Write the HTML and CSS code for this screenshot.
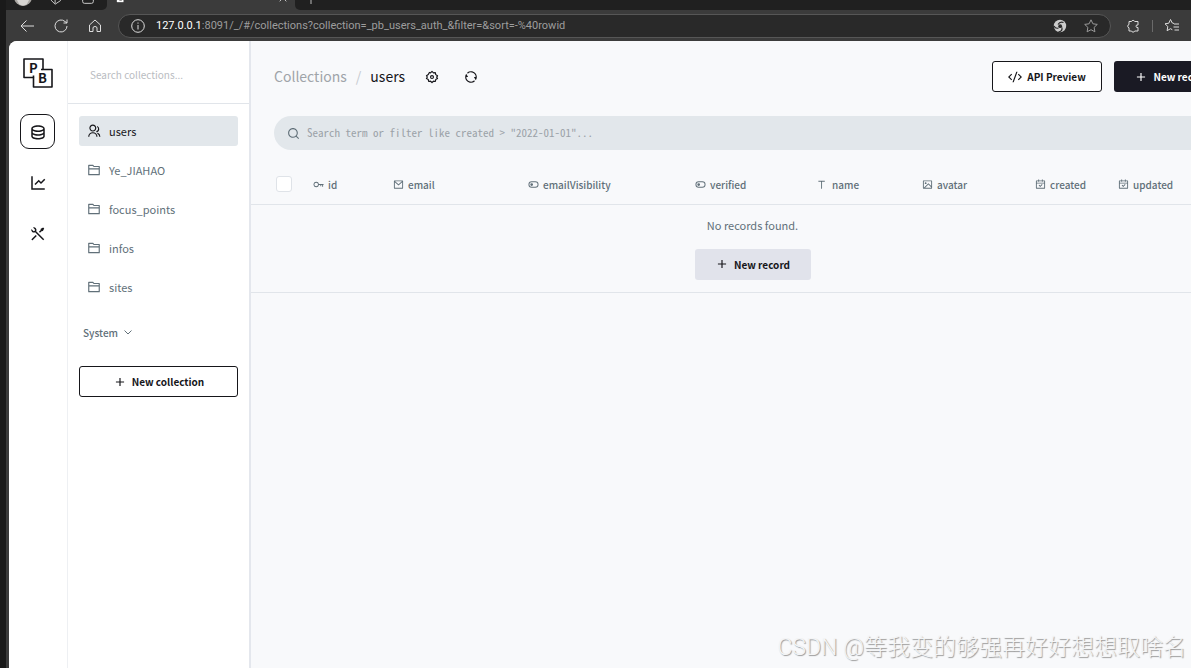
FILE: index.html
```html
<!DOCTYPE html>
<html lang="en">
<head>
    <meta charset="UTF-8">
    <title>users - PocketBase</title>
    <link rel="stylesheet" href="styles.css">
</head>
<body>

<svg class="sprite" aria-hidden="true">
    <symbol id="i-plus" viewBox="0 0 24 24"><path d="M11 11V5h2v6h6v2h-6v6h-2v-6H5v-2z"/></symbol>
    <symbol id="i-folder" viewBox="0 0 24 24"><path d="M12.414 5H21a1 1 0 0 1 1 1v14a1 1 0 0 1-1 1H3a1 1 0 0 1-1-1V4a1 1 0 0 1 1-1h7.414l2 2zM4 11v8h16v-8H4zm0-2h16V7h-8.414l-2-2H4v4z"/></symbol>
    <symbol id="i-toggle" viewBox="0 0 24 24"><path d="M8 7a5 5 0 0 0 0 10h8a5 5 0 0 0 0-10H8zm0-2h8a7 7 0 0 1 0 14H8A7 7 0 0 1 8 5zm0 10a3 3 0 1 1 0-6 3 3 0 0 1 0 6z"/></symbol>
    <symbol id="i-calendar" viewBox="0 0 24 24"><path d="M9 1v2h6V1h2v2h4a1 1 0 0 1 1 1v16a1 1 0 0 1-1 1H3a1 1 0 0 1-1-1V4a1 1 0 0 1 1-1h4V1h2zm11 9H4v9h16v-9zm-4.964 1.136l1.414 1.414-4.95 4.95-3.536-3.536L9.38 12.55l2.121 2.122 3.536-3.536zM7 5H4v3h16V5h-3v1h-2V5H9v1H7V5z"/></symbol>
</svg>

<div class="desktop"></div>

<div class="browser">
    <div class="tabstrip">
        <div class="tab-tools">
            <svg class="person" viewBox="0 0 18 18"><circle cx="9" cy="9" r="9" fill="#aaa7a3"/><path d="M3 12q6-5 12 0l-2 4q-4 3-8 0z" fill="#d8d6d3"/></svg>
            <svg class="line" viewBox="0 0 18 18"><path d="M3 5v6l5 5 6-4V5M8 9v6M8 10l6-2"/></svg>
            <svg class="line" viewBox="0 0 18 18"><rect x="3" y="3" width="12" height="12" rx="2"/><path d="M3 9h12M7 9V3"/></svg>
        </div>
        <div class="tab">
            <svg class="favicon" viewBox="0 0 12 12"><path d="M1 1h8v10H1z" fill="#fff"/><path d="M4 5h3v4H4z" fill="#333"/></svg>
            <svg class="line" viewBox="0 0 12 12"><path d="M2 2l8 8M10 2l-8 8"/></svg>
        </div>
        <div class="new-tab">
            <svg class="line" viewBox="0 0 12 12"><path d="M6 0v12M0 6h12"/></svg>
        </div>
    </div>

    <div class="toolbar">
        <button class="tool" aria-label="Back"><svg class="line" viewBox="0 0 16 16"><path d="M15 8H2M7.500 2.500L2 8l5.500 5.500"/></svg></button>
        <button class="tool" aria-label="Refresh"><svg class="line" viewBox="0 0 16 16"><path d="M14 8a6 6 0 1 1-2-4.500L14 5M14 1.500V5h-3.500"/></svg></button>
        <button class="tool" aria-label="Home"><svg class="line" viewBox="0 0 16 16"><path d="M2.500 7L8 2l5.500 5v6.500h-3.500V10q0-1.500-2-1.500T6 10v3.500H2.500z"/></svg></button>
        <div class="address">
            <svg class="line" viewBox="0 0 16 16"><circle cx="8" cy="8" r="6.300"/><path d="M8 7v4.500M8 4.500v1.200"/></svg>
            <span class="url"><b>127.0.0.1</b>:8091/_/#/collections?collection=_pb_users_auth_&amp;filter=&amp;sort=-%40rowid</span>
            <svg class="swirl" viewBox="0 0 16 16"><circle cx="8" cy="8" r="6.200" fill="#ccc"/><path d="M6 6.500Q8 3 11.500 4.500M10 9.500Q10.500 13.500 6.500 13.800M6.500 10Q3.500 11 2 8" fill="none" stroke="#292929" stroke-width="1.200"/><circle cx="8.200" cy="8.200" r="1.900" fill="#292929"/></svg>
            <svg class="line star" viewBox="0 0 16 16"><path d="M8 1.800l1.900 4 4.400.6-3.200 3 .8 4.400L8 11.700l-3.900 2.100.8-4.400-3.200-3 4.400-.6z"/></svg>
        </div>
        <button class="tool" aria-label="Extensions"><svg class="line" viewBox="0 0 16 16"><path d="M4 3.500h2.500a1.700 1.700 0 0 1 3.200 0h3.300V7q-2-.5-2 1.200T13 9.500V13H9.700a1.700 1.700 0 0 1-3.200 0H4V9.800a1.700 1.700 0 0 1 0-3.300z"/></svg></button>
        <span class="split"></span>
        <button class="tool" aria-label="Favorites"><svg class="line" viewBox="0 0 16 16"><path d="M10 5.500L8.300 5 6.500 1.500 4.800 5.200 1 5.800l2.800 2.700-.7 4.200 3.400-2 1.800 1M10 6h5M9.500 9H15M10.500 12H15"/></svg></button>
    </div>

    <div class="app">
        <nav class="rail">
            <a href="#/" class="logo" aria-label="PocketBase">
                <svg viewBox="0 0 32 32">
                    <path d="M2 2h19v10.500h9V30H11.500V20.500H2z" fill="#fff" stroke="#16161a" stroke-width="1.600" stroke-linejoin="round"/>
                    <path d="M11.500 20.500v-2M21 12.500h-2" stroke="#16161a" stroke-width="1.600"/>
                    <text x="7" y="16">P</text>
                    <text x="16" y="26">B</text>
                </svg>
            </a>
            <a href="#/collections" class="rail-item active" aria-label="Collections">
                <svg viewBox="0 0 24 24"><path d="M5 12.500c0 .313.461.858 1.530 1.393C7.914 14.585 9.877 15 12 15s4.086-.415 5.470-1.107c1.069-.535 1.530-1.080 1.530-1.393v-2.171C17.350 11.348 14.827 12 12 12s-5.350-.652-7-1.671V12.500zm14 2.829C17.350 16.348 14.827 17 12 17s-5.350-.652-7-1.671V17.500c0 .313.461.858 1.530 1.393C7.914 19.585 9.877 20 12 20s4.086-.415 5.470-1.107c1.069-.535 1.530-1.080 1.530-1.393v-2.171zM3 17.500v-10C3 5.015 7.030 3 12 3s9 2.015 9 4.500v10c0 2.485-4.030 4.500-9 4.500s-9-2.015-9-4.500zM12 10c2.123 0 4.086-.415 5.470-1.107C18.539 8.358 19 7.813 19 7.500s-.461-.858-1.530-1.393C16.086 5.415 14.123 5 12 5s-4.086.415-5.470 1.107C5.461 6.642 5 7.187 5 7.500s.461.858 1.530 1.393C7.914 9.585 9.877 10 12 10z"/></svg>
            </a>
            <a href="#/logs" class="rail-item" aria-label="Logs">
                <svg viewBox="0 0 24 24"><path d="M5 3v16h16v2H3V3h2zm15.293 3.293l1.414 1.414L16 13.414l-3-2.999-4.293 4.292-1.414-1.414L13 7.586l3 2.999 4.293-4.292z"/></svg>
            </a>
            <a href="#/settings" class="rail-item" aria-label="Settings">
                <svg viewBox="0 0 24 24"><path d="M5.329 3.272a3.500 3.500 0 0 1 4.255 4.962l10.709 10.710-1.414 1.414L8.170 9.649a3.500 3.500 0 0 1-4.963-4.256L5.444 7.630a1.500 1.500 0 1 0 2.121-2.121L5.329 3.272zM15.697 5.155l3.182-1.768 1.414 1.415-1.768 3.182-1.768.353-2.121 2.121-1.414-1.414 2.121-2.121.354-1.768zM8.979 13.287l1.415 1.414-5.304 5.303a1 1 0 0 1-1.492-1.327l.078-.087 5.303-5.303z"/></svg>
            </a>
        </nav>

        <aside class="sidebar">
            <div class="sidebar-search">
                <input type="text" placeholder="Search collections..." aria-label="Search collections">
            </div>
            <div class="collections">
                <a href="#/users" class="collection active">
                    <svg class="icon" viewBox="0 0 24 24"><path d="M2 22a8 8 0 1 1 16 0h-2a6 6 0 1 0-12 0H2zm8-9c-3.315 0-6-2.685-6-6s2.685-6 6-6 6 2.685 6 6-2.685 6-6 6zm0-2c2.210 0 4-1.790 4-4s-1.790-4-4-4-4 1.790-4 4 1.790 4 4 4zm8.284 3.703A8.002 8.002 0 0 1 23 22h-2a6.001 6.001 0 0 0-3.537-5.473l.82-1.824zm-.688-11.290A5.500 5.500 0 0 1 21 8.500a5.499 5.499 0 0 1-5 5.478v-2.013a3.500 3.500 0 0 0 1.041-6.609l.555-1.943z"/></svg>
                    users
                </a>
                <a href="#/Ye_JIAHAO" class="collection"><svg class="icon"><use href="#i-folder"/></svg>Ye_JIAHAO</a>
                <a href="#/focus_points" class="collection"><svg class="icon"><use href="#i-folder"/></svg>focus_points</a>
                <a href="#/infos" class="collection"><svg class="icon"><use href="#i-folder"/></svg>infos</a>
                <a href="#/sites" class="collection"><svg class="icon"><use href="#i-folder"/></svg>sites</a>
                <button class="system">System <svg viewBox="0 0 12 12"><path d="M2.500 4.500L6 8l3.500-3.500" fill="none" stroke="currentColor"/></svg></button>
                <button class="btn btn-outline btn-block"><svg class="icon"><use href="#i-plus"/></svg>New collection</button>
            </div>
        </aside>

        <main class="main">
            <div class="page">
                <header class="page-header">
                    <div class="breadcrumbs">
                        <a href="#/collections">Collections</a>
                        <span class="slash">/</span>
                        <span class="current">users</span>
                    </div>
                    <button class="btn-circle" aria-label="Edit collection"><svg viewBox="0 0 24 24"><path d="M7.500 4.200L9.500 5 12 2.500 14.500 5l3.200-.5.700 3.400L21.500 10l-1.500 2.200 1.500 2.500-3.100 1.700-.7 3.300-3.200-.5-2.500 2.300-2.500-2.300-3.200.5-.7-3.300-3.100-1.700L4 12 2.500 9.800l3.100-2z" fill="none" stroke="currentColor" stroke-width="2" stroke-linejoin="round"/><circle cx="12" cy="12" r="2.500" fill="none" stroke="currentColor" stroke-width="2"/></svg></button>
                    <button class="btn-circle" aria-label="Refresh records"><svg viewBox="0 0 24 24"><path d="M5.463 4.433A9.961 9.961 0 0 1 12 2c5.523 0 10 4.477 10 10 0 2.136-.67 4.116-1.810 5.740L17 12h3A8 8 0 0 0 6.460 6.228l-.997-1.795zm13.074 15.134A9.961 9.961 0 0 1 12 22C6.477 22 2 17.523 2 12c0-2.136.67-4.116 1.810-5.740L7 12H4a8 8 0 0 0 13.540 5.772l.997 1.795z"/></svg></button>
                    <div class="header-buttons">
                        <button class="btn btn-outline"><svg class="icon" viewBox="0 0 24 24"><path d="M24 12l-5.657 5.657-1.414-1.414L21.172 12l-4.243-4.243 1.414-1.414L24 12zM2.828 12l4.243 4.243-1.414 1.414L0 12l5.657-5.657L7.070 7.757 2.828 12zm6.960 9H7.660l6.552-18h2.128L9.788 21z"/></svg>API Preview</button>
                        <button class="btn btn-dark"><svg class="icon"><use href="#i-plus"/></svg>New record</button>
                    </div>
                </header>

                <div class="searchbar">
                    <svg viewBox="0 0 24 24"><path d="M18.031 16.617l4.283 4.282-1.415 1.415-4.282-4.283A8.960 8.960 0 0 1 11 20c-4.968 0-9-4.032-9-9s4.032-9 9-9 9 4.032 9 9a8.960 8.960 0 0 1-1.969 5.617zm-2.006-.742A6.977 6.977 0 0 0 18 11c0-3.868-3.133-7-7-7-3.868 0-7 3.132-7 7 0 3.867 3.132 7 7 7a6.977 6.977 0 0 0 4.875-1.975l.15-.15z"/></svg>
                    <input type="text" placeholder='Search term or filter like created &gt; "2022-01-01"...' aria-label="Filter records">
                </div>

                <table class="records">
                    <colgroup>
                        <col class="c-check"><col class="c-id"><col class="c-email"><col class="c-visibility"><col class="c-verified"><col class="c-name"><col class="c-avatar"><col class="c-created"><col>
                    </colgroup>
                    <thead>
                        <tr>
                            <th class="check"><input type="checkbox" aria-label="Select all"></th>
                            <th><span class="field"><svg viewBox="0 0 24 24"><path d="M12.917 13A6.002 6.002 0 0 1 1 12a6 6 0 0 1 11.917-1H23v2h-1v4h-2v-4h-2v3h-2v-3h-3.083zM7 16a4 4 0 1 0 0-8 4 4 0 0 0 0 8z"/></svg>id</span></th>
                            <th><span class="field"><svg viewBox="0 0 24 24"><path d="M3 3h18a1 1 0 0 1 1 1v16a1 1 0 0 1-1 1H3a1 1 0 0 1-1-1V4a1 1 0 0 1 1-1zm17 4.238l-7.928 7.100L4 7.216V19h16V7.238zM4.511 5l7.550 6.662L19.502 5H4.511z"/></svg>email</span></th>
                            <th><span class="field"><svg><use href="#i-toggle"/></svg>emailVisibility</span></th>
                            <th><span class="field"><svg><use href="#i-toggle"/></svg>verified</span></th>
                            <th><span class="field"><svg viewBox="0 0 24 24"><path d="M11 6v15H9V6H3V4h14v2z"/></svg>name</span></th>
                            <th><span class="field"><svg viewBox="0 0 24 24"><path d="M2.992 21A.993.993 0 0 1 2 20.007V3.993A1 1 0 0 1 2.992 3h18.016c.548 0 .992.445.992.993v16.014a1 1 0 0 1-.992.993H2.992zM20 15V5H4v14L14 9l6 6zm0 2.828l-6-6L6.828 19H20v-1.172zM8 11a2 2 0 1 1 0-4 2 2 0 0 1 0 4z"/></svg>avatar</span></th>
                            <th><span class="field"><svg><use href="#i-calendar"/></svg>created</span></th>
                            <th><span class="field"><svg><use href="#i-calendar"/></svg>updated</span></th>
                        </tr>
                    </thead>
                    <tbody>
                        <tr>
                            <td colspan="9">
                                <p>No records found.</p>
                                <button class="btn btn-light"><svg class="icon"><use href="#i-plus"/></svg>New record</button>
                            </td>
                        </tr>
                    </tbody>
                </table>
            </div>
        </main>
    </div>
</div>

<div class="watermark">CSDN @等我变的够强再好好想想取啥名</div>

</body>
</html>
```
FILE: styles.css
```css
* {
    box-sizing: border-box;
}

body {
    margin: 0;
    height: 100vh;
    display: flex;
    overflow: hidden;
    background: #3b3b3b;
    color: #16161a;
    font-family: "Noto Sans CJK SC", "Noto Sans", sans-serif;
    font-size: 11px;
}

a {
    color: inherit;
    text-decoration: none;
}

button, input {
    font: inherit;
    color: inherit;
}

svg {
    fill: currentColor;
    flex: none;
}

.sprite {
    display: none;
}

.desktop {
    width: 6px;
    background: #1a1a1a;
}

.browser {
    flex: 1;
    min-width: 0;
    display: flex;
    flex-direction: column;
}

/* browser window */

.line {
    width: 16px;
    height: 16px;
    fill: none;
    stroke: #ddd;
}

.tabstrip {
    height: 10px;
    display: flex;
    align-items: flex-end;
    overflow: hidden;
    background: #3b3b3b;
}

.tab-tools {
    width: 101px;
    height: 10px;
    display: flex;
    align-items: flex-end;
    gap: 16px;
    padding: 0 0 4px 8px;
    background: #202020;
    border-bottom-right-radius: 5px;
}

.person {
    width: 18px;
    height: 18px;
}

.tab {
    width: 188px;
    display: flex;
    justify-content: space-between;
    padding: 0 7px 7px 9px;
}

.tab svg, .new-tab svg {
    width: 10px;
    height: 10px;
}

.new-tab {
    flex: 1;
    height: 10px;
    display: flex;
    align-items: flex-end;
    padding: 0 0 6px 11px;
    background: #202020;
    border-bottom-left-radius: 5px;
}

.toolbar {
    height: 31px;
    display: flex;
    align-items: center;
    gap: 2px;
    padding: 0 3px 0 5px;
}

.tool {
    width: 32px;
    height: 24px;
    padding: 0 8px;
    border: none;
    background: none;
}

.tool svg {
    display: block;
}

.address {
    flex: 1;
    height: 24px;
    display: flex;
    align-items: center;
    gap: 10px;
    margin: 0 4px 0 5px;
    padding: 0 11px;
    border: 1px solid #565656;
    border-radius: 12px;
    background: #292929;
    color: #9d9d9d;
}

.url {
    flex: 1;
    font-family: Roboto, "Open Sans", sans-serif;
    font-size: 11px;
}

.url b {
    color: #fff;
    font-weight: 400;
}

.swirl {
    width: 16px;
    height: 16px;
    margin-right: 5px;
}

.star {
    stroke: #999;
}

.split {
    width: 1px;
    height: 12px;
    margin: 0 1px;
    background: #6a6a6a;
}

/* app */

.app {
    flex: 1;
    display: flex;
    margin-left: 3px;
    overflow: hidden;
    border-top-left-radius: 8px;
    background: #f8f9fb;
}

.rail {
    width: 59px;
    display: flex;
    flex-direction: column;
    align-items: center;
    gap: 16px;
    padding: 16px 1px 0 0;
    background: #fff;
    border-right: 1px solid #eef0f3;
}

.logo {
    margin-bottom: 9px;
}

.logo svg {
    display: block;
    width: 32px;
    height: 32px;
}

.logo text {
    font-family: "Noto Sans CJK SC", sans-serif;
    font-size: 13px;
    font-weight: 700;
}

.rail-item {
    width: 35px;
    height: 35px;
    display: flex;
    align-items: center;
    justify-content: center;
    border: 1px solid transparent;
    border-radius: 9px;
}

.rail-item.active {
    border-color: #16161a;
}

.rail-item svg {
    width: 18px;
    height: 18px;
}

.sidebar {
    width: 183px;
    background: #fff;
    border-right: 2px solid #e4e7ed;
}

.sidebar-search {
    height: 63px;
    display: flex;
    align-items: center;
    padding: 4px 22px 0;
    border-bottom: 1px solid #e1e5ea;
}

.sidebar-search input {
    width: 100%;
    padding: 0;
    border: none;
    outline: none;
    font-size: 10px;
}

::placeholder {
    color: #b9bcc1;
    opacity: 1;
}

.collections {
    display: flex;
    flex-direction: column;
    gap: 9px;
    padding: 12px 11px;
}

.collection {
    height: 30px;
    display: flex;
    align-items: center;
    gap: 8px;
    padding: 0 8px;
    border-radius: 3px;
    color: #617079;
}

.collection.active {
    background: #e2e7eb;
    color: #16161a;
}

.icon {
    width: 14px;
    height: 14px;
}

.system {
    height: 16px;
    display: flex;
    align-items: center;
    gap: 4px;
    align-self: flex-start;
    margin: 13px 0 17px;
    padding: 0 4px;
    border: none;
    background: none;
    color: #617079;
    font-size: 10px;
    font-weight: 500;
}

.system svg {
    width: 12px;
    height: 12px;
}

.btn {
    height: 31px;
    display: inline-flex;
    align-items: center;
    justify-content: center;
    gap: 5px;
    min-width: 110px;
    padding: 0 15px;
    border: 1px solid transparent;
    border-radius: 3px;
    color: #16161a;
    font-size: 10px;
    font-weight: 700;
    white-space: nowrap;
}

.btn-outline {
    border-color: #16161a;
    background: #fff;
}

.btn-block {
    width: 100%;
}

.btn-dark, .btn-light {
    width: 116px;
}

.btn-dark {
    background: #1a1a24;
    color: #fff;
}

.btn-light {
    background: #e1e3eb;
}

.main {
    flex: 1;
    min-width: 0;
    overflow: hidden;
}

/* the page is wider than the window */
.page {
    margin-right: -63px;
}

.page-header {
    height: 71px;
    display: flex;
    align-items: center;
    padding: 0 24px 0 23px;
}

.breadcrumbs {
    display: flex;
    gap: 9px;
    margin-right: 14px;
    padding-bottom: 2px;
    font-size: 14px;
    color: #9fa4a9;
}

.breadcrumbs .slash {
    color: #c6cad0;
}

.breadcrumbs .current {
    color: #16161a;
}

.btn-circle {
    width: 26px;
    height: 26px;
    margin-right: 13px;
    padding: 6px;
    border: none;
    background: none;
}

.btn-circle svg {
    display: block;
    width: 14px;
    height: 14px;
}

.header-buttons {
    display: flex;
    gap: 12px;
    margin-left: auto;
}

.searchbar {
    height: 34px;
    display: flex;
    align-items: center;
    gap: 7px;
    margin: 4px 24px 15px 23px;
    padding: 0 13px;
    border-radius: 17px;
    background: #e2e7eb;
}

.searchbar svg {
    width: 13px;
    height: 13px;
    color: #617079;
}

.searchbar input {
    flex: 1;
    padding: 0 0 2px;
    border: none;
    outline: none;
    background: none;
    font-family: "Noto Sans Mono CJK SC", "Liberation Mono", monospace;
    font-size: 11px;
}

.searchbar ::placeholder {
    color: #9ba2a8;
}

.records {
    width: 100%;
    table-layout: fixed;
    border-collapse: collapse;
    color: #617079;
}

.c-check { width: 53px; }
.c-id { width: 80px; }
.c-email { width: 135px; }
.c-visibility { width: 167px; }
.c-verified { width: 122px; }
.c-name { width: 105px; }
.c-avatar { width: 113px; }
.c-created { width: 83px; }

.records th {
    height: 39px;
    padding: 0 9px;
    border-bottom: 1px solid #e1e5ea;
    font-size: 10px;
    font-weight: 500;
    text-align: left;
}

.records .check {
    padding-left: 25px;
}

.records .check input {
    appearance: none;
    display: block;
    width: 16px;
    height: 16px;
    margin: 0;
    border: 1px solid #dfe3e8;
    border-radius: 3px;
    background: #fff;
}

.field {
    display: flex;
    align-items: center;
    gap: 4px;
}

.field svg {
    width: 11px;
    height: 11px;
}

.records td {
    padding: 12px 0;
    border-bottom: 1px solid #e1e5ea;
    text-align: center;
}

.records p {
    margin: 0 0 15px;
    line-height: 17px;
}

.records td .btn {
    vertical-align: top;
}

.watermark {
    position: absolute;
    right: 5px;
    bottom: 3px;
    color: #f4f5f6;
    font-family: Roboto, "Noto Sans CJK SC", sans-serif;
    font-size: 23px;
    font-weight: 300;
    line-height: 34px;
    text-shadow: 1px 1px 1px #999;
}
```
